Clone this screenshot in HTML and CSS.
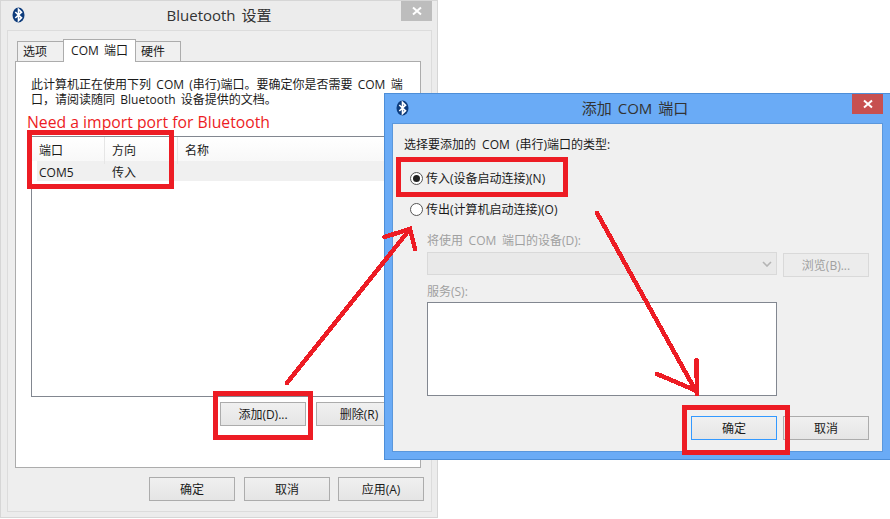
FILE: index.html
```html
<!DOCTYPE html>
<html>
<head>
<title>Bluetooth 设置</title>
<meta charset="utf-8">
<link rel="stylesheet" href="styles.css">
</head>
<body>

<div class="desk">

    <!-- back window -->
    <div class="win win-back">
        <div class="titlebar">
            <svg class="bt" viewBox="0 0 12 16"><ellipse cx="6" cy="8" rx="6" ry="7.6" fill="#0e3c7c"/><polyline points="2.8,5 9,10.8 6,13.6 6,2.4 9,5.2 2.8,11" fill="none" stroke="#fff" stroke-width="1.6"/></svg>
            <div class="title">Bluetooth 设置</div>
            <div class="close"><svg viewBox="0 0 10 10"><path d="M1 1.5L9 8.5M9 1.5L1 8.5" stroke="#fff" stroke-width="2"/></svg></div>
        </div>
        <div class="frame">
            <div class="tabs">
                <div class="tab">选项</div>
                <div class="tab active">COM 端口</div>
                <div class="tab tab-last">硬件</div>
            </div>
            <div class="panel">
                <p class="intro">此计算机正在使用下列 COM (串行)端口。要确定你是否需要 COM 端<br>口，请阅读随同 Bluetooth 设备提供的文档。</p>
                <div class="note">Need a import port for Bluetooth</div>
                <div class="list">
                    <div class="list-head">
                        <div>端口</div>
                        <div>方向</div>
                        <div class="last">名称</div>
                    </div>
                    <div class="list-row">
                        <div>COM5</div>
                        <div>传入</div>
                    </div>
                </div>
                <div class="btn-row">
                    <button class="btn">添加(D)...</button>
                    <button class="btn">删除(R)</button>
                </div>
            </div>
            <div class="footer">
                <button class="btn btn-first">确定</button>
                <button class="btn">取消</button>
                <button class="btn">应用(A)</button>
            </div>
        </div>
    </div>

    <!-- front window -->
    <div class="win win-front">
        <div class="titlebar">
            <svg class="bt" viewBox="0 0 12 16"><ellipse cx="6" cy="8" rx="6" ry="7.6" fill="#0e3c7c"/><polyline points="2.8,5 9,10.8 6,13.6 6,2.4 9,5.2 2.8,11" fill="none" stroke="#fff" stroke-width="1.6"/></svg>
            <div class="title">添加 COM 端口</div>
            <div class="close close-red"><svg viewBox="0 0 10 10"><path d="M1 1.5L9 8.5M9 1.5L1 8.5" stroke="#fff" stroke-width="2"/></svg></div>
        </div>
        <div class="frame frame-front">
            <p class="ask">选择要添加的 COM (串行)端口的类型:</p>
            <div class="radio radio-in"><span class="dot on"></span>传入(设备启动连接)(N)</div>
            <div class="radio radio-out"><span class="dot"></span>传出(计算机启动连接)(O)</div>
            <div class="sub">
                <div class="off-label">将使用 COM 端口的设备(D):</div>
                <div class="pick-row">
                    <div class="pick"><svg viewBox="0 0 10 6"><path d="M1 1L5 5L9 1" fill="none" stroke="#b4b4b4" stroke-width="1.6"/></svg></div>
                    <button class="btn btn-off">浏览(B)...</button>
                </div>
                <div class="off-label svc">服务(S):</div>
                <div class="svc-box"></div>
            </div>
            <div class="footer footer-front">
                <button class="btn btn-main">确定</button>
                <button class="btn">取消</button>
            </div>
        </div>
    </div>

    <!-- red marks drawn on top of the screenshot -->
    <svg class="marks" viewBox="0 0 890 519">
        <g fill="none" stroke="#ed1c24" stroke-width="5">
            <rect x="29.5" y="132.5" width="142" height="54"/>
            <rect x="398.5" y="159.5" width="167" height="35"/>
            <rect x="215.5" y="393.5" width="95" height="44"/>
            <rect x="684.5" y="407.5" width="103" height="45"/>
        </g>
        <g fill="none" stroke="#ed1c24" stroke-width="4.5" stroke-linecap="round" shape-rendering="crispEdges">
            <path d="M287 383L410 229"/>
            <path d="M384.500 237L410 229L415 249"/>
            <path d="M597 213L697 393"/>
            <path d="M657 374L697 391"/>
            <path d="M696.500 360L697 394"/>
        </g>
    </svg>

</div>

</body>
</html>
```

FILE: styles.css
```css
*{margin:0;padding:0;box-sizing:border-box;}
body{background:#fff;font-family:"Open Sans","Noto Sans CJK SC",sans-serif;font-size:12px;color:#1a1a1a;overflow:hidden;}
.desk{position:relative;width:890px;height:519px;overflow:hidden;}

.win{position:absolute;display:flex;flex-direction:column;}
.win-back{left:0;top:0;width:438px;height:518px;background:#ececec;border:1px solid #d6d6d6;}
.win-front{left:384px;top:93px;width:506px;height:367px;background:#6aabf6;border:1px solid #4d8ed8;border-right:0;}

.titlebar{height:29px;flex:none;display:flex;align-items:flex-start;position:relative;}
.bt{position:absolute;left:11px;top:6px;width:13px;height:16px;}
.title{flex:1;text-align:center;font-size:15px;line-height:28px;color:#333;word-spacing:2px;}
.win-front .title{padding-right:5px;}
.close{position:absolute;right:5px;top:0;width:31px;height:20px;background:#bdbdbd;display:flex;align-items:center;justify-content:center;}
.close svg{width:10px;height:10px;}
.close-red{right:7px;background:#c75050;}

.frame{flex:1;margin:0 5px 5px 6px;background:#eee;border:1px solid #dcdcdc;padding:8px 7px 0 7px;}
.tabs{display:flex;align-items:flex-end;height:22px;margin-left:2px;position:relative;}
.tab{height:20px;width:46px;padding-left:5px;background:#f0f0f0;border:1px solid #acacac;border-bottom:0;border-right:0;line-height:20px;}
.tab.active{width:73px;height:23px;padding-left:0;margin-bottom:-1px;background:#fff;border-right:1px solid #acacac;position:relative;z-index:1;line-height:21px;text-align:center;word-spacing:2px;}
.tab-last{width:45px;border-left:0;border-right:1px solid #acacac;}

.panel{height:407px;margin-right:3px;background:#fff;border:1px solid #acacac;padding:15px 15px 0 15px;}
.intro{line-height:15px;white-space:nowrap;word-spacing:2.2px;}
.note{font-size:15.750px;line-height:20px;margin:5px 0 0 -4px;color:#ed1c24;white-space:nowrap;}

.list{height:261px;margin-top:4px;border:1px solid #828790;}
.list-head{display:grid;grid-template-columns:73px 73px 1fr;height:24px;line-height:27px;background:linear-gradient(#fff,#f8f8f8);}
.list-head div{padding-left:7px;border-right:1px solid #e6e6e6;}
.list-head .last{border-right:0;}
.list-row{display:grid;grid-template-columns:68px 73px 1fr;height:20px;line-height:23px;margin-left:5px;background:#f0f0f0;}
.list-row div{padding-left:7px;}
.list-row div:first-child{padding-left:2px;}

.btn{display:block;width:86px;height:24px;border:1px solid #acacac;background:linear-gradient(#f0f0f0,#e5e5e5);font-family:inherit;font-size:12px;color:#1a1a1a;}
.btn-row{display:flex;justify-content:flex-end;gap:10px;margin-top:5px;padding-right:3px;}
.footer{display:flex;justify-content:flex-end;gap:8px;margin-top:9px;}
.btn-first{margin-right:1px;}

.frame-front{margin:0 7px 7px 7px;background:#f0f0f0;border-color:#5a97dc;padding:13px 0 0 11px;}
.ask{line-height:15px;word-spacing:3px;}
.radio{display:flex;align-items:center;height:20px;margin-left:6px;}
.radio-in{margin-top:16px;}
.radio-out{margin-top:11px;}
.dot{width:13px;height:13px;margin-right:3px;border:1px solid #555;border-radius:50%;background:#fff;display:flex;align-items:center;justify-content:center;}
.dot.on::after{content:"";width:7px;height:7px;border-radius:50%;background:#222;}
.sub{margin:14px 0 0 23px;color:#a0a0a0;}
.off-label{line-height:15px;word-spacing:2.5px;}
.pick-row{display:flex;gap:6px;margin-top:4px;}
.pick{width:350px;height:23px;background:#e9e9e9;border:1px solid #d9d9d9;display:flex;align-items:center;justify-content:flex-end;padding-right:4px;}
.pick svg{width:10px;height:6px;}
.btn-off{margin-top:1px;color:#a0a0a0;background:#ececec;border-color:#d9d9d9;}
.svc{margin-top:7px;}
.svc-box{width:350px;height:94px;margin-top:3px;background:#fff;border:1px solid #828790;}
.footer-front{gap:6px;margin-top:20px;padding-right:13px;}
.btn-main{border-color:#3399ff;}

.marks{position:absolute;left:0;top:0;width:890px;height:519px;pointer-events:none;}
```
